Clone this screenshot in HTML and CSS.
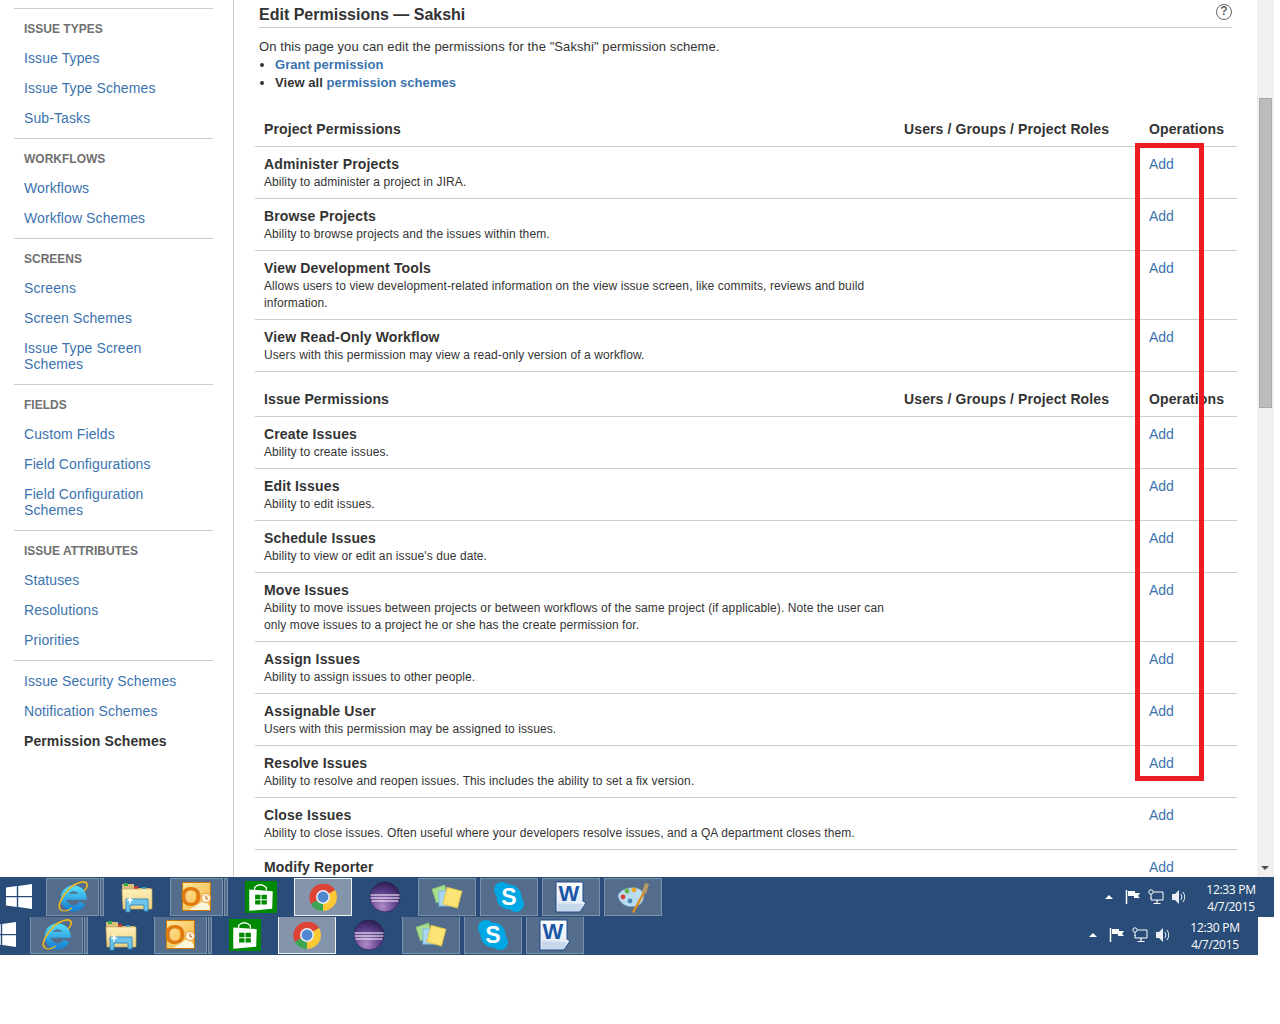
FILE: index.html
```html
<!DOCTYPE html>
<html lang="en">
<head>
<meta charset="utf-8">
<title>Edit Permissions — Sakshi</title>
<link rel="stylesheet" href="styles.css">
</head>
<body>
<svg class="defs" aria-hidden="true">
  <defs>
    <linearGradient id="g-ie" x1="0" y1="0" x2="0" y2="1"><stop offset="0" stop-color="#4fd6f6"/><stop offset="1" stop-color="#1a86d8"/></linearGradient>
    <linearGradient id="g-folder" x1="0" y1="0" x2="0" y2="1"><stop offset="0" stop-color="#fdf0b8"/><stop offset="1" stop-color="#ecd184"/></linearGradient>
    <linearGradient id="g-ol" x1="0" y1="0" x2="1" y2="1"><stop offset="0" stop-color="#ffe9a0"/><stop offset="1" stop-color="#f6b23c"/></linearGradient>
    <radialGradient id="g-ecl" cx="0.4" cy="0.8" r="0.85"><stop offset="0" stop-color="#b18cc8"/><stop offset="0.55" stop-color="#5f3f8e"/><stop offset="1" stop-color="#241b48"/></radialGradient>
    <linearGradient id="g-word" x1="0" y1="0" x2="0" y2="1"><stop offset="0" stop-color="#ffffff"/><stop offset="1" stop-color="#d9e4f2"/></linearGradient>
    <symbol id="i-win" viewBox="0 0 26 25"><path fill="#fff" d="M0 3.6 10.8 2.1V12H0ZM12.2 1.9 26 0V12H12.2ZM0 13.2H10.8V23L0 21.5ZM12.2 13.2H26V25L12.2 23.1Z"/></symbol>
    <symbol id="i-ie" viewBox="0 0 32 32">
      <path d="M25.500 22A10 10 0 1 1 26.500 15.800H8" fill="none" stroke="url(#g-ie)" stroke-width="6"/>
      <path d="M4 29C-1 25 6 14 13 7 20 1 29-1 30 3 31 6 29 8 27 10" fill="none" stroke="#f2bb1a" stroke-width="1.600"/>
      <path d="M4 29C7 31 12 29 15 27" fill="none" stroke="#f2bb1a" stroke-width="1.100"/>
    </symbol>
    <symbol id="i-folder" viewBox="0 0 32 32">
      <path d="M1 3H13V7H29L31 9V26H2Z" fill="#d9bf78"/>
      <rect x="3" y="2" width="4" height="3" fill="#33a852"/><rect x="13" y="5" width="4" height="3" fill="#c8382e"/><rect x="21" y="6" width="4" height="3" fill="#2f9ad8"/>
      <path d="M1 8H31V28H2Z" fill="url(#g-folder)" stroke="#c6a95c" stroke-width="0.7"/>
      <path d="M5 18H27V30H23V24H9V31H5Z" fill="#6fc4ec" stroke="#2c86bf" stroke-width="0.9"/>
      <path d="M9 14 10 18 13 19 10 20 9 24 8 20 5 19 8 18Z" fill="#fff"/>
    </symbol>
    <symbol id="i-outlook" viewBox="0 0 32 32">
      <rect x="1.500" y="1.500" width="28" height="28" fill="url(#g-ol)" stroke="#c8760a"/>
      <path d="M8 29 24 19 29 26V29Z" fill="#fff6dc"/>
      <text x="10" y="25" text-anchor="middle" class="ico-o">O</text>
      <circle cx="25" cy="17" r="4.600" fill="#fff3de" stroke="#e9a23a"/>
      <path d="M25 14.500V17.500L27 18" fill="none" stroke="#c8560a"/>
    </symbol>
    <symbol id="i-store" viewBox="0 0 30 30">
      <rect width="30" height="30" fill="#008a00"/>
      <path d="M4 8 26 9.500 25.500 26 4 28Z" fill="#fff"/>
      <path d="M9 8.500V6Q14 1 20 6V9" fill="none" stroke="#fff" stroke-width="1.200"/>
      <path d="M9.500 13H14.500V17H9.500ZM15.500 13H20.500V17H15.500ZM9.500 18H14.500V22H9.500ZM15.500 18H20.500V22H15.500Z" fill="#008a00"/>
    </symbol>
    <symbol id="i-chrome" viewBox="0 0 32 32">
      <path d="M16 16 3.900 23A14 14 0 0 1 28.100 9Z" fill="#dd4437"/>
      <path d="M16 16 28.100 9A14 14 0 0 1 16 30Z" fill="#fcc934"/>
      <path d="M16 16 16 30A14 14 0 0 1 3.900 23Z" fill="#3ba551"/>
      <circle cx="16" cy="16" r="7" fill="#e8eef5"/><circle cx="16" cy="16" r="5.400" fill="#4f86cf"/>
    </symbol>
    <symbol id="i-eclipse" viewBox="0 0 32 32">
      <circle cx="16" cy="16" r="15" fill="url(#g-ecl)" stroke="#2a2050" stroke-width="0.6"/>
      <path d="M1.500 13.500H30.500V14.500H1.500ZM1.500 16.500H30.500V17.500H1.500ZM2.500 19.500H29.500V20.500H2.500Z" fill="#fff"/>
    </symbol>
    <symbol id="i-notes" viewBox="0 0 32 32">
      <rect x="3" y="6" width="13" height="14" transform="rotate(-18 9 13)" fill="#a9dd8f" stroke="#8cc975"/>
      <rect x="8" y="10" width="13" height="15" fill="#a9d6f3" stroke="#7fbde6"/>
      <rect x="14" y="8" width="15" height="17" transform="rotate(15 21 16)" fill="#fde476" stroke="#e8c84c"/>
    </symbol>
    <symbol id="i-skype" viewBox="0 0 32 32">
      <circle cx="16" cy="16" r="12.500" fill="#00a7e5"/><circle cx="9" cy="9" r="8" fill="#00a7e5"/><circle cx="23" cy="23" r="8" fill="#00a7e5"/>
      <text x="16" y="24" text-anchor="middle" class="ico-s">S</text>
    </symbol>
    <symbol id="i-word" viewBox="0 0 32 32">
      <path d="M1 1H28V20L31 22 25 31H1Z" fill="url(#g-word)" stroke="#1f4a8c"/>
      <path d="M3 22 28 23 25 30H3Z" fill="#c8d8ec"/>
      <text x="14" y="20" text-anchor="middle" class="ico-w">W</text>
    </symbol>
    <symbol id="i-paint" viewBox="0 0 32 32">
      <path d="M1 15C3 8 14 5 22 8 29 11 28 23 19 25 12 27 3 24 1 15Z" fill="#b9dcee" stroke="#7fb2cf" stroke-width="0.6"/>
      <circle cx="6" cy="16" r="2.400" fill="#d8433a"/><circle cx="10" cy="10" r="2.400" fill="#67b54a"/><circle cx="17" cy="9" r="2.400" fill="#e8a62b"/><circle cx="13" cy="20" r="2.400" fill="#4b84b8"/>
      <path d="M15 31 26 11 28 12 17 32Z" fill="#e08a1e"/>
      <path d="M25 11 28 2 32 3 29 13Z" fill="#b99a66"/>
    </symbol>
    <symbol id="i-flag" viewBox="0 0 16 16"><path d="M1.500 1V15" stroke="#fff" stroke-width="1.500"/><path d="M3 2H10V4H15L13 7 15 9H9V7H3Z" fill="#fff"/></symbol>
    <symbol id="i-net" viewBox="0 0 16 16"><path d="M5.500 3H15V11H3V8" fill="none" stroke="#fff"/><path d="M9 11V14M5.500 14.500H12.500" stroke="#fff" stroke-width="1.200"/><circle cx="3" cy="3" r="2.200" fill="none" stroke="#fff"/><path d="M3 5V9" stroke="#fff"/></symbol>
    <symbol id="i-vol" viewBox="0 0 16 16"><path d="M1 5H4L8 1V15L4 11H1Z" fill="#fff" opacity="0.9"/><path d="M10 5Q12 8 10 11M12 3Q15.500 8 12 13" fill="none" stroke="#fff" stroke-width="0.9"/></symbol>
  </defs>
</svg>

<main class="page">
  <nav class="sidebar">
    <section class="group">
      <h4>ISSUE TYPES</h4>
      <a href="#">Issue Types</a>
      <a href="#">Issue Type Schemes</a>
      <a href="#">Sub-Tasks</a>
    </section>
    <section class="group">
      <h4>WORKFLOWS</h4>
      <a href="#">Workflows</a>
      <a href="#">Workflow Schemes</a>
    </section>
    <section class="group">
      <h4>SCREENS</h4>
      <a href="#">Screens</a>
      <a href="#">Screen Schemes</a>
      <a href="#">Issue Type Screen Schemes</a>
    </section>
    <section class="group">
      <h4>FIELDS</h4>
      <a href="#">Custom Fields</a>
      <a href="#">Field Configurations</a>
      <a href="#">Field Configuration Schemes</a>
    </section>
    <section class="group">
      <h4>ISSUE ATTRIBUTES</h4>
      <a href="#">Statuses</a>
      <a href="#">Resolutions</a>
      <a href="#">Priorities</a>
    </section>
    <section class="group group-last">
      <a href="#">Issue Security Schemes</a>
      <a href="#">Notification Schemes</a>
      <a href="#" class="current">Permission Schemes</a>
    </section>
  </nav>

  <div class="content">
    <header class="title-row">
      <h2>Edit Permissions — Sakshi</h2>
      <span class="help">?</span>
    </header>
    <p class="intro">On this page you can edit the permissions for the "Sakshi" permission scheme.</p>
    <ul class="actions">
      <li><a href="#"><b>Grant permission</b></a></li>
      <li><b>View all <a href="#">permission schemes</a></b></li>
    </ul>
    <table class="perms">
      <colgroup><col class="c1"><col class="c2"><col class="c3"></colgroup>
      <tbody>
        <tr class="head first"><th>Project Permissions</th><th>Users / Groups / Project Roles</th><th>Operations</th></tr>
        <tr><td><div class="name">Administer Projects</div><div class="desc">Ability to administer a project in JIRA.</div></td><td></td><td><a href="#">Add</a></td></tr>
        <tr><td><div class="name">Browse Projects</div><div class="desc">Ability to browse projects and the issues within them.</div></td><td></td><td><a href="#">Add</a></td></tr>
        <tr><td><div class="name">View Development Tools</div><div class="desc">Allows users to view development-related information on the view issue screen, like commits, reviews and build information.</div></td><td></td><td><a href="#">Add</a></td></tr>
        <tr><td><div class="name">View Read-Only Workflow</div><div class="desc">Users with this permission may view a read-only version of a workflow.</div></td><td></td><td><a href="#">Add</a></td></tr>
        <tr class="head"><th>Issue Permissions</th><th>Users / Groups / Project Roles</th><th>Operations</th></tr>
        <tr><td><div class="name">Create Issues</div><div class="desc">Ability to create issues.</div></td><td></td><td><a href="#">Add</a></td></tr>
        <tr><td><div class="name">Edit Issues</div><div class="desc">Ability to edit issues.</div></td><td></td><td><a href="#">Add</a></td></tr>
        <tr><td><div class="name">Schedule Issues</div><div class="desc">Ability to view or edit an issue's due date.</div></td><td></td><td><a href="#">Add</a></td></tr>
        <tr><td><div class="name">Move Issues</div><div class="desc">Ability to move issues between projects or between workflows of the same project (if applicable). Note the user can only move issues to a project he or she has the create permission for.</div></td><td></td><td><a href="#">Add</a></td></tr>
        <tr><td><div class="name">Assign Issues</div><div class="desc">Ability to assign issues to other people.</div></td><td></td><td><a href="#">Add</a></td></tr>
        <tr><td><div class="name">Assignable User</div><div class="desc">Users with this permission may be assigned to issues.</div></td><td></td><td><a href="#">Add</a></td></tr>
        <tr><td><div class="name">Resolve Issues</div><div class="desc">Ability to resolve and reopen issues. This includes the ability to set a fix version.</div></td><td></td><td><a href="#">Add</a></td></tr>
        <tr><td><div class="name">Close Issues</div><div class="desc">Ability to close issues. Often useful where your developers resolve issues, and a QA department closes them.</div></td><td></td><td><a href="#">Add</a></td></tr>
        <tr><td><div class="name">Modify Reporter</div></td><td></td><td><a href="#">Add</a></td></tr>
      </tbody>
    </table>
  </div>

  <div class="scrollbar">
    <div class="thumb"></div>
    <div class="arrow"></div>
  </div>
</main>

<div class="highlight"></div>

<footer class="taskbar bar-top">
  <div class="start"><svg class="win"><use href="#i-win"/></svg></div>
  <div class="slots">
    <div class="slot split"><div class="face"><svg class="ico"><use href="#i-ie"/></svg></div><div class="sliver"></div></div>
    <div class="slot"><svg class="ico"><use href="#i-folder"/></svg></div>
    <div class="slot split"><div class="face"><svg class="ico"><use href="#i-outlook"/></svg></div><div class="sliver"></div></div>
    <div class="slot"><svg class="ico"><use href="#i-store"/></svg></div>
    <div class="slot face active"><svg class="ico"><use href="#i-chrome"/></svg></div>
    <div class="slot"><svg class="ico"><use href="#i-eclipse"/></svg></div>
    <div class="slot face"><svg class="ico"><use href="#i-notes"/></svg></div>
    <div class="slot face"><svg class="ico"><use href="#i-skype"/></svg></div>
    <div class="slot face"><svg class="ico"><use href="#i-word"/></svg></div>
    <div class="slot face"><svg class="ico"><use href="#i-paint"/></svg></div>
  </div>
  <div class="tray">
    <span class="caret"></span>
    <svg class="tray-ico"><use href="#i-flag"/></svg>
    <svg class="tray-ico"><use href="#i-net"/></svg>
    <svg class="tray-ico"><use href="#i-vol"/></svg>
    <div class="clock"><span>12:33 PM</span><span>4/7/2015</span></div>
  </div>
</footer>

<footer class="taskbar bar-bottom">
  <div class="start"><svg class="win"><use href="#i-win"/></svg></div>
  <div class="slots">
    <div class="slot split"><div class="face"><svg class="ico"><use href="#i-ie"/></svg></div><div class="sliver"></div></div>
    <div class="slot"><svg class="ico"><use href="#i-folder"/></svg></div>
    <div class="slot split"><div class="face"><svg class="ico"><use href="#i-outlook"/></svg></div><div class="sliver"></div></div>
    <div class="slot"><svg class="ico"><use href="#i-store"/></svg></div>
    <div class="slot face active"><svg class="ico"><use href="#i-chrome"/></svg></div>
    <div class="slot"><svg class="ico"><use href="#i-eclipse"/></svg></div>
    <div class="slot face"><svg class="ico"><use href="#i-notes"/></svg></div>
    <div class="slot face"><svg class="ico"><use href="#i-skype"/></svg></div>
    <div class="slot face"><svg class="ico"><use href="#i-word"/></svg></div>
  </div>
  <div class="tray">
    <span class="caret"></span>
    <svg class="tray-ico"><use href="#i-flag"/></svg>
    <svg class="tray-ico"><use href="#i-net"/></svg>
    <svg class="tray-ico"><use href="#i-vol"/></svg>
    <div class="clock"><span>12:30 PM</span><span>4/7/2015</span></div>
  </div>
</footer>
</body>
</html>
```

FILE: styles.css
```css
* { box-sizing: border-box; }
html, body { margin: 0; padding: 0; background: #fff; }
body {
  position: relative;
  width: 1280px;
  height: 1024px;
  overflow: hidden;
  font-family: "Liberation Sans", Arial, sans-serif;
  font-size: 14px;
  color: #333;
}
a { color: #3b73af; text-decoration: none; }
.defs { position: absolute; width: 0; height: 0; }

/* Page shell */
.page { display: flex; width: 1274px; height: 877px; overflow: hidden; }

/* Sidebar */
.sidebar {
  flex: 0 0 234px;
  height: 877px;
  padding: 8px 20px 0 14px;
  border-right: 1px solid #ccc;
}
.group { padding: 4px 0 5px; border-top: 1px solid #ccc; }
.group-last { padding-top: 5px; }
.group h4 {
  margin: 0;
  padding: 2px 10px 0;
  font-size: 12px;
  font-weight: bold;
  line-height: 28px;
  color: #707070;
}
.group a { display: block; padding: 7px 30px 7px 10px; line-height: 16px; letter-spacing: 0.1px; }
.group a.current { font-weight: bold; color: #333; }

/* Content */
.content { flex: 1 1 auto; min-width: 0; padding: 4px 25px 0; }
.title-row {
  display: flex;
  justify-content: space-between;
  align-items: flex-start;
  height: 24px;
  border-bottom: 1px solid #ccc;
}
.title-row h2 { margin: 0; padding-top: 1px; font-size: 16px; line-height: 20px; font-weight: bold; color: #333; }
.help {
  width: 16px;
  height: 16px;
  border: 1.5px solid #666;
  border-radius: 50%;
  font-size: 12px;
  font-weight: bold;
  line-height: 13px;
  text-align: center;
  color: #666;
}
.intro { margin: 10px 0 0; font-size: 13px; line-height: 18px; letter-spacing: 0.09px; }
.actions { margin: 0 0 20px; padding: 0 0 0 16px; font-size: 13px; line-height: 18px; letter-spacing: 0.05px; }

/* Permissions table */
.perms {
  width: 982px;
  margin-left: -4px;
  table-layout: fixed;
  border-collapse: separate;
  border-spacing: 0;
}
.c1 { width: 640px; }
.c2 { width: 245px; }
.c3 { width: 97px; }
.perms th, .perms td {
  padding: 8px 9px;
  text-align: left;
  vertical-align: top;
  line-height: 18px;
  border-bottom: 1px solid #ccc;
}
.perms th { padding-top: 18px; font-size: 14px; font-weight: bold; letter-spacing: 0.12px; color: #333; }
.perms .first th { padding-top: 8px; }
.name { font-weight: bold; line-height: 18px; letter-spacing: 0.15px; color: #333; }
.desc { margin: 1px 0 -1px; font-size: 12px; line-height: 17px; letter-spacing: 0.09px; color: #333; }

/* Scrollbar */
.scrollbar { position: relative; flex: 0 0 17px; background: #f0f0f0; }
.thumb {
  position: absolute;
  top: 98px;
  left: 2px;
  width: 13px;
  height: 310px;
  background: #bcbcbc;
  border: 1px solid #a8a8a8;
}
.arrow {
  position: absolute;
  left: 4px;
  top: 866px;
  border-style: solid;
  border-width: 4px 4px 0;
  border-color: #505050 transparent transparent;
}

/* Red annotation */
.highlight {
  position: absolute;
  left: 1135px;
  top: 143px;
  width: 69px;
  height: 638px;
  border: 5px solid #ed1c24;
}

/* Taskbars */
.taskbar { display: flex; overflow: hidden; background: #294c78; color: #fff; }
.bar-top { width: 1274px; height: 40px; padding-top: 1px; }
.bar-bottom { width: 1258px; height: 38px; }
.bar-bottom > .slots { margin-top: -1px; }
.start { display: flex; justify-content: flex-end; flex: 0 0 46px; min-width: 0; padding: 6px 14px 0 0; }
.bar-bottom .start { flex-basis: 30px; padding-top: 5px; }
.win { flex: none; width: 26px; height: 25px; }
.slots { display: flex; gap: 4px; }
.slot { display: flex; align-items: center; justify-content: center; width: 58px; height: 38px; }
.split { gap: 1px; }
.face {
  display: flex;
  align-items: center;
  justify-content: center;
  background: #546d8c;
  border: 1px solid #7d91a9;
}
.split .face { width: 53px; height: 38px; }
.sliver { width: 4px; height: 38px; background: #546d8c; border: 1px solid #7d91a9; }
.active { background: #8495ab; border: 1px solid #f0f3f6; }
.ico { width: 32px; height: 32px; }
.ico-o { font: bold 27px "Liberation Sans", sans-serif; fill: #e07b10; }
.ico-s { font: bold 23px "Liberation Sans", sans-serif; fill: #fff; }
.ico-w { font: bold 22px "Liberation Sans", sans-serif; fill: #1a56a8; }

.tray { display: flex; align-items: center; margin-left: auto; padding-right: 18px; height: 38px; }
.bar-bottom .tray { margin-top: -1px; }
.caret {
  width: 0;
  height: 0;
  margin-right: 12px;
  border-style: solid;
  border-width: 0 4px 4px;
  border-color: transparent transparent #fff;
}
.tray-ico { width: 16px; height: 16px; margin-right: 7px; }
.clock {
  display: flex;
  flex-direction: column;
  align-items: center;
  width: 50px;
  margin-left: 12px;
  padding-top: 1px;
  font-family: "Open Sans", sans-serif;
  font-size: 12px;
  line-height: 17px;
  letter-spacing: -0.3px;
}
```
